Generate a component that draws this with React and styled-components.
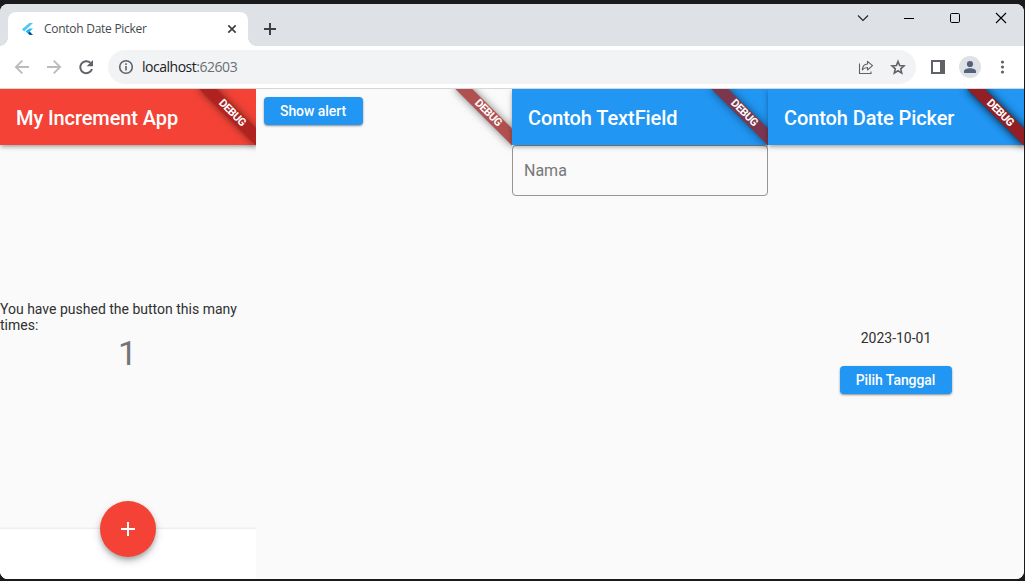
import React from 'react';
import styled, { createGlobalStyle, css } from 'styled-components';

const GlobalStyle = createGlobalStyle`
  * { box-sizing: border-box; }
  html, body { margin: 0; padding: 0; background: #1a191b; overflow: hidden; }
  body { font-family: Roboto, "Liberation Sans", sans-serif; }
  svg { display: block; flex: none; }
`;

const Desktop = styled.div`
  width: 1025px;
  height: 581px;
  padding: 4px 1px 2px 0;
  background: #1a191b;
`;

const Window = styled.div`
  display: flex;
  flex-direction: column;
  height: 575px;
  border-radius: 8px;
  overflow: hidden;
  background: #fafafa;
`;

const TabStrip = styled.div`
  display: flex;
  align-items: flex-end;
  height: 42px;
  padding-left: 8px;
  background: #dee1e6;
`;

const Tab = styled.div`
  position: relative;
  display: flex;
  align-items: center;
  width: 240px;
  height: 34px;
  padding: 0 10px 0 12px;
  background: #fff;
  border-radius: 8px 8px 0 0;
  &::before, &::after {
    content: '';
    position: absolute;
    bottom: 0;
    width: 8px;
    height: 8px;
  }
  &::before { left: -8px; background: radial-gradient(circle at 0 0, transparent 7.5px, #fff 8px); }
  &::after { right: -8px; background: radial-gradient(circle at 100% 0, transparent 7.5px, #fff 8px); }
`;

const TabTitle = styled.span`
  flex: 1;
  margin-left: 8px;
  font: 12px/16px "Open Sans", "Noto Sans", sans-serif;
  letter-spacing: -0.27px;
  color: #45494d;
  white-space: nowrap;
`;

const NewTab = styled.div`
  margin-left: 14px;
  height: 34px;
  display: flex;
  align-items: center;
`;

const WindowControls = styled.div`
  display: flex;
  align-self: flex-start;
  margin-left: auto;
  padding-top: 6px;
`;

const Control = styled.div`
  display: flex;
  justify-content: center;
  width: 46px;
`;

const Toolbar = styled.div`
  display: flex;
  align-items: center;
  height: 43px;
  padding: 0 14px;
  border-bottom: 1px solid #d5d7da;
  background: #fff;
`;

const NavIcons = styled.div`
  display: flex;
  gap: 16px;
`;

const AddressBar = styled.div`
  display: flex;
  flex: none;
  align-items: center;
  width: 808px;
  height: 34px;
  margin-left: 14px;
  padding: 0 10px;
  border-radius: 17px;
  background: #f1f3f4;
`;

const Url = styled.span`
  flex: 1;
  margin-left: 8px;
  font: 14px/18px "Open Sans", "Noto Sans", sans-serif;
  letter-spacing: -0.48px;
  color: #202124;
  span { color: #6b6f74; }
`;

const BarActions = styled.div`
  display: flex;
  gap: 16px;
`;

const ToolbarActions = styled.div`
  display: flex;
  align-items: center;
  margin-left: 14px;
`;

const Avatar = styled.div`
  display: flex;
  align-items: center;
  justify-content: center;
  width: 22px;
  height: 22px;
  margin: 0 13px;
  border-radius: 50%;
  background: #dee1e6;
`;

const Viewport = styled.main`
  display: grid;
  grid-template-columns: repeat(4, 256px);
  flex: 1;
  overflow: hidden;
`;

const Panel = styled.section`
  position: relative;
  display: flex;
  flex-direction: column;
  min-height: 0;
  background: #fafafa;
`;

const AppBar = styled.header`
  position: relative;
  flex: none;
  height: 56px;
  padding: 0 16px;
  background: ${p => p.$color};
  color: #fff;
  font-size: 20px;
  font-weight: 500;
  line-height: 58px;
  letter-spacing: -0.09px;
  white-space: nowrap;
  box-shadow: 0 2px 4px -1px rgba(0,0,0,.24), 0 2px 5px rgba(0,0,0,.14), 0 1px 8px rgba(0,0,0,.08);
`;

const BannerClip = styled.div`
  position: absolute;
  top: 0;
  right: 0;
  width: 70px;
  height: 70px;
  overflow: hidden;
  pointer-events: none;
`;

const BannerStrip = styled.div`
  position: absolute;
  top: 28px;
  left: 30px;
  width: 80px;
  height: 12px;
  transform-origin: 40px -28px;
  transform: rotate(45deg);
  background: linear-gradient(rgba(183,28,28,.627), rgba(183,28,28,.627)), rgba(0,0,0,.33);
  box-shadow: 0 0 9px rgba(0,0,0,.5);
  color: #fff;
  font-size: 11px;
  font-weight: 700;
  line-height: 12.5px;
  letter-spacing: -0.4px;
  text-align: center;
`;

const Body = styled.div`
  display: flex;
  flex: 1;
  flex-direction: column;
  align-items: center;
  justify-content: center;
  font-size: 14px;
  line-height: 16px;
  color: #303030;
`;

const Message = styled.p`
  margin: 0;
  width: 256px;
`;

const Count = styled.div`
  padding-right: 1px;
  font-size: 34px;
  line-height: 40px;
  color: #757575;
`;

const BottomBar = styled.footer`
  position: relative;
  display: flex;
  justify-content: center;
  height: 50px;
  background: #fff;
  box-shadow: 0 -1px 2px rgba(0,0,0,.07);
`;

const Fab = styled.button`
  display: flex;
  align-items: center;
  justify-content: center;
  width: 56px;
  height: 56px;
  margin-top: -28px;
  padding: 0;
  border: 0;
  border-radius: 50%;
  background: #f44336;
  box-shadow: 0 3px 5px -1px rgba(0,0,0,.25), 0 4px 8px rgba(0,0,0,.2);
`;

const RaisedButton = styled.button`
  height: 28px;
  width: ${p => p.$width};
  padding: 0 1px 0 0;
  border: 0;
  border-radius: 4px;
  background: #2196f3;
  color: #fff;
  font: 500 14px/28px Roboto, sans-serif;
  letter-spacing: -0.06px;
  white-space: nowrap;
  box-shadow: 0 1px 2px rgba(0,0,0,.35), 0 1px 3px rgba(0,0,0,.12);
  ${p => p.$spaced && css`margin-top: 20px;`}
`;

const TopLeft = styled.div`
  display: flex;
  padding: 8px;
`;

const TextField = styled.div`
  position: relative;
  height: 51px;
  padding: 0 11px;
  border: 1px solid rgba(0,0,0,.4);
  border-radius: 4px;
  color: #777;
  font-size: 16px;
  line-height: 49px;
`;

const Ribbon = () => <BannerStrip>DEBUG</BannerStrip>;

const DebugBanner = ({ layers = 1 }) => (
  <BannerClip>
    {Array.from({ length: layers }, (_, i) => <Ribbon key={i} />)}
  </BannerClip>
);

const FlutterLogo = () => (
  <svg width="16" height="16" viewBox="0 0 16 16">
    <path d="M9.3 2H13L4.1 10.5 2 8.2z" fill="#54c5f8" />
    <path d="M9.4 7.4H13L9.8 10.5 7.8 12.1 5.8 10.4z" fill="#29b6f6" />
    <path d="M5.8 10.4l2-1.9 2 2-2 1.9z" fill="#29b6f6" />
    <path d="M7.8 12.2l2-1.8L13 14H9.6z" fill="#01579b" />
  </svg>
);

const Stroke = ({ size = 16, color = '#5f6368', width = 2, children }) => (
  <svg width={size} height={size} viewBox={`0 0 ${size} ${size}`} fill="none" stroke={color} strokeWidth={width}>
    {children}
  </svg>
);

export default function App() {
  return (
    <Desktop>
      <GlobalStyle />
      <Window>
        <TabStrip>
          <Tab>
            <FlutterLogo />
            <TabTitle>Contoh Date Picker</TabTitle>
            <Stroke size={12} color="#3c4043" width={1.7}><path d="M2.3 2.3l7.4 7.4M9.7 2.3L2.3 9.7" /></Stroke>
          </Tab>
          <NewTab>
            <Stroke color="#3c4043" width={2}><path d="M8 2v12M2 8h12" /></Stroke>
          </NewTab>
          <WindowControls>
            <Control><Stroke color="#222" width={1.1}><path d="M3 5.5l5 5 5-5" /></Stroke></Control>
            <Control><Stroke color="#000" width={1}><path d="M3 8.5h10" /></Stroke></Control>
            <Control><Stroke color="#000" width={1}><rect x="3.5" y="3.5" width="9" height="9" rx="1.2" /></Stroke></Control>
            <Control><Stroke color="#000" width={1.1}><path d="M3 3l10 10M13 3L3 13" /></Stroke></Control>
          </WindowControls>
        </TabStrip>

        <Toolbar>
          <NavIcons>
            <Stroke color="#babcbe" width={1.9}><path d="M15 8H2.5M8.3 1.6L1.9 8l6.4 6.4" /></Stroke>
            <Stroke color="#babcbe" width={1.9}><path d="M1 8h12.5M7.7 1.6L14.1 8l-6.4 6.4" /></Stroke>
            <Stroke width={2}>
              <path d="M14 10A6 6 0 1 1 12.4 3.8" />
              <path d="M15 1v6.3H8.7z" fill="#5f6368" stroke="none" />
            </Stroke>
          </NavIcons>
          <AddressBar>
            <Stroke width={1.6}>
              <circle cx="8" cy="8" r="6.3" />
              <path d="M8 7v4.6M8 4.3v1.6" />
            </Stroke>
            <Url>localhost<span>:62603</span></Url>
            <BarActions>
              <Stroke width={1.1}>
                <path d="M1.5 4.5v10H13v-2" />
                <path d="M4.3 10.8c.2-3.6 2-5.5 5.2-5.8V2.3l5 4.4-5 4.3V8.5c-2.2 0-3.8.5-5.2 2.3z" strokeLinejoin="round" />
              </Stroke>
              <Stroke width={1.6}>
                <path d="M8 2.5l1.6 4 4.4.4-3.3 2.9 1 4.3L8 11.8l-3.7 2.3 1-4.3L2 6.900l4.400-.4z" />
              </Stroke>
            </BarActions>
          </AddressBar>
          <ToolbarActions>
            <Stroke width={2}>
              <rect x="2" y="2" width="12" height="12" />
              <path d="M10 1h5v14h-5z" fill="#5f6368" stroke="none" />
            </Stroke>
            <Avatar>
              <svg width="14" height="14" viewBox="0 0 14 14" fill="#56617a">
                <circle cx="7" cy="4" r="3.1" />
                <path d="M1 13v-1.7C1 9.2 4 8.2 7 8.2s6 1 6 3.1V13z" />
              </svg>
            </Avatar>
            <svg width="16" height="16" viewBox="0 0 16 16" fill="#5f6368">
              <circle cx="8.5" cy="3" r="1.6" />
              <circle cx="8.5" cy="8" r="1.6" />
              <circle cx="8.5" cy="13" r="1.6" />
            </svg>
          </ToolbarActions>
        </Toolbar>

        <Viewport>
          <Panel>
            <AppBar $color="#f44336">My Increment App</AppBar>
            <Body>
              <Message>You have pushed the button this many times:</Message>
              <Count>1</Count>
            </Body>
            <BottomBar>
              <Fab aria-label="Increment">
                <Stroke size={24} color="#fff" width={2}><path d="M12 5v14M5 12h14" /></Stroke>
              </Fab>
            </BottomBar>
            <DebugBanner />
          </Panel>

          <Panel>
            <TopLeft>
              <RaisedButton $width="99px">Show alert</RaisedButton>
            </TopLeft>
            <DebugBanner />
          </Panel>

          <Panel>
            <AppBar $color="#2196f3">Contoh TextField</AppBar>
            <TextField>Nama</TextField>
            <DebugBanner />
          </Panel>

          <Panel>
            <AppBar $color="#2196f3">Contoh Date Picker</AppBar>
            <Body>
              <span>2023-10-01</span>
              <RaisedButton $width="112px" $spaced>Pilih Tanggal</RaisedButton>
            </Body>
            <DebugBanner layers={2} />
          </Panel>
        </Viewport>
      </Window>
    </Desktop>
  );
}
